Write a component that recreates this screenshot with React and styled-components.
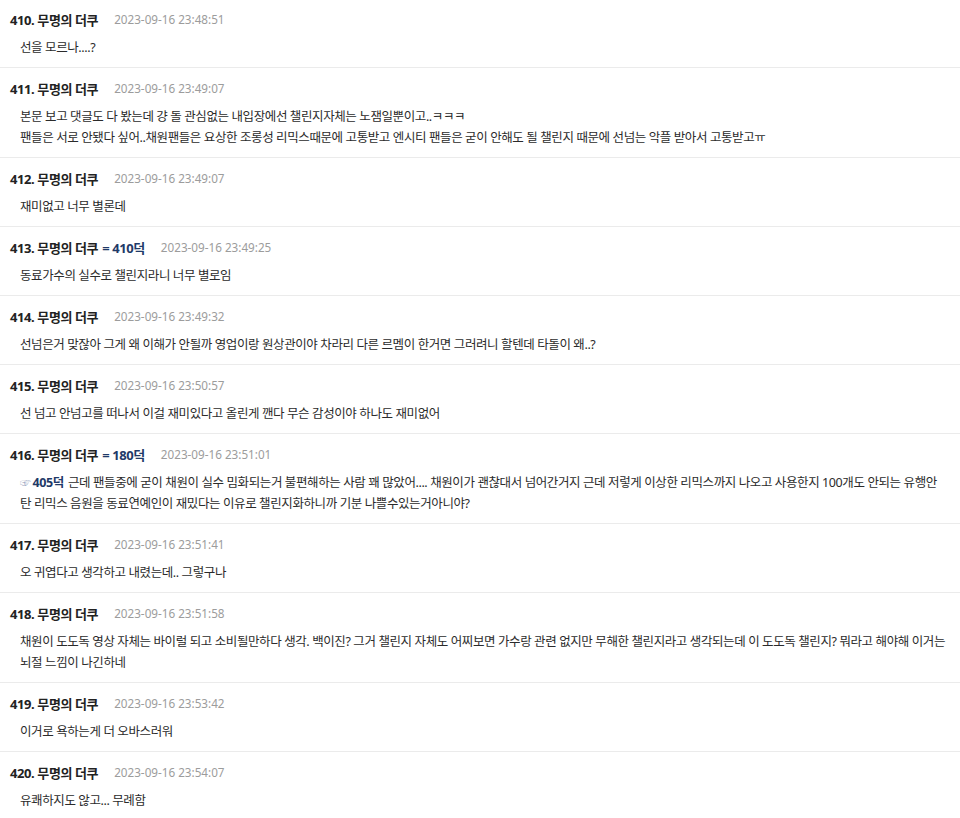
import React from 'react'
import styled, { createGlobalStyle } from 'styled-components'

const GlobalStyle = createGlobalStyle`
  body {
    margin: 0;
    background: #fff;
    font-family: "Noto Sans", "Noto Sans CJK KR", sans-serif;
  }
`

const List = styled.div`
  width: 960px;
  margin-top: -1px;
`

const Item = styled.div`
  padding: 11px 0 9px;
  border-bottom: 1px solid #ebebeb;

  &:last-child {
    border-bottom: none;
  }
`

const Header = styled.div`
  display: flex;
  align-items: center;
  height: 18px;
  padding-left: 10px;
`

const Name = styled.span`
  font-size: 13px;
  font-weight: 700;
  color: #222;
  letter-spacing: -0.4px;
`

const Ref = styled.span`
  color: #1f3a68;
  margin-left: 4px;
`

const Time = styled.span`
  margin-left: 16px;
  font-size: 11.7px;
  color: #9c9c9c;
  font-family: "Noto Sans", sans-serif;
`

const Body = styled.div`
  margin-top: 9px;
  padding: 0 14px 0 20px;
  font-size: 12.5px;
  line-height: 21px;
  color: #2b2b2b;
  letter-spacing: -0.4px;
  word-break: keep-all;
`

const Quote = styled.span`
  color: #a6b0c8;
  font-size: 11px;
  margin-right: 2px;
`

const QuoteNum = styled.span`
  color: #1f3a68;
  font-weight: 700;
  margin-right: 4px;
`

const posts = [
  { no: 410, time: '2023-09-16 23:48:51', lines: ['선을 모르나....?'] },
  {
    no: 411,
    time: '2023-09-16 23:49:07',
    lines: [
      '본문 보고 댓글도 다 봤는데 걍 돌 관심없는 내입장에선 챌린지자체는 노잼일뿐이고..ㅋㅋㅋ',
      '팬들은 서로 안됐다 싶어..채원팬들은 요상한 조롱성 리믹스때문에 고통받고 엔시티 팬들은 굳이 안해도 될 챌린지 때문에 선넘는 악플 받아서 고통받고ㅠ',
    ],
  },
  { no: 412, time: '2023-09-16 23:49:07', lines: ['재미없고 너무 별론데'] },
  { no: 413, ref: '410덕', time: '2023-09-16 23:49:25', lines: ['동료가수의 실수로 챌린지라니 너무 별로임'] },
  {
    no: 414,
    time: '2023-09-16 23:49:32',
    lines: ['선넘은거 맞잖아 그게 왜 이해가 안될까 영업이랑 원상관이야 차라리 다른 르멤이 한거면 그러려니 할텐데 타돌이 왜..?'],
  },
  {
    no: 415,
    time: '2023-09-16 23:50:57',
    lines: ['선 넘고 안넘고를 떠나서 이걸 재미있다고 올린게 깬다 무슨 감성이야 하나도 재미없어'],
  },
  {
    no: 416,
    ref: '180덕',
    time: '2023-09-16 23:51:01',
    quote: '405덕',
    lines: [
      '근데 팬들중에 굳이 채원이 실수 밈화되는거 불편해하는 사람 꽤 많았어.... 채원이가 괜찮대서 넘어간거지 근데 저렇게 이상한 리믹스까지 나오고 사용한지 100개도 안되는 유행안 탄 리믹스 음원을 동료연예인이 재밌다는 이유로 챌린지화하니까 기분 나쁠수있는거아니야?',
    ],
  },
  { no: 417, time: '2023-09-16 23:51:41', lines: ['오 귀엽다고 생각하고 내렸는데.. 그렇구나'] },
  {
    no: 418,
    time: '2023-09-16 23:51:58',
    lines: [
      '채원이 도도독 영상 자체는 바이럴 되고 소비될만하다 생각. 백이진? 그거 챌린지 자체도 어찌보면 가수랑 관련 없지만 무해한 챌린지라고 생각되는데 이 도도독 챌린지? 뭐라고 해야해 이거는 뇌절 느낌이 나긴하네',
    ],
  },
  { no: 419, time: '2023-09-16 23:53:42', lines: ['이거로 욕하는게 더 오바스러워'] },
  { no: 420, time: '2023-09-16 23:54:07', lines: ['유쾌하지도 않고... 무례함'] },
]

export default function App() {
  return (
    <>
      <GlobalStyle />
      <List>
        {posts.map(p => (
          <Item key={p.no}>
            <Header>
              <Name>
                {p.no}. 무명의 더쿠
                {p.ref && <Ref>= {p.ref}</Ref>}
              </Name>
              <Time>{p.time}</Time>
            </Header>
            <Body>
              {p.quote && (
                <>
                  <Quote>☞</Quote>
                  <QuoteNum>{p.quote}</QuoteNum>
                </>
              )}
              {p.lines.map((l, i) => (
                <React.Fragment key={i}>
                  {i > 0 && <br />}
                  {l}
                </React.Fragment>
              ))}
            </Body>
          </Item>
        ))}
      </List>
    </>
  )
}
